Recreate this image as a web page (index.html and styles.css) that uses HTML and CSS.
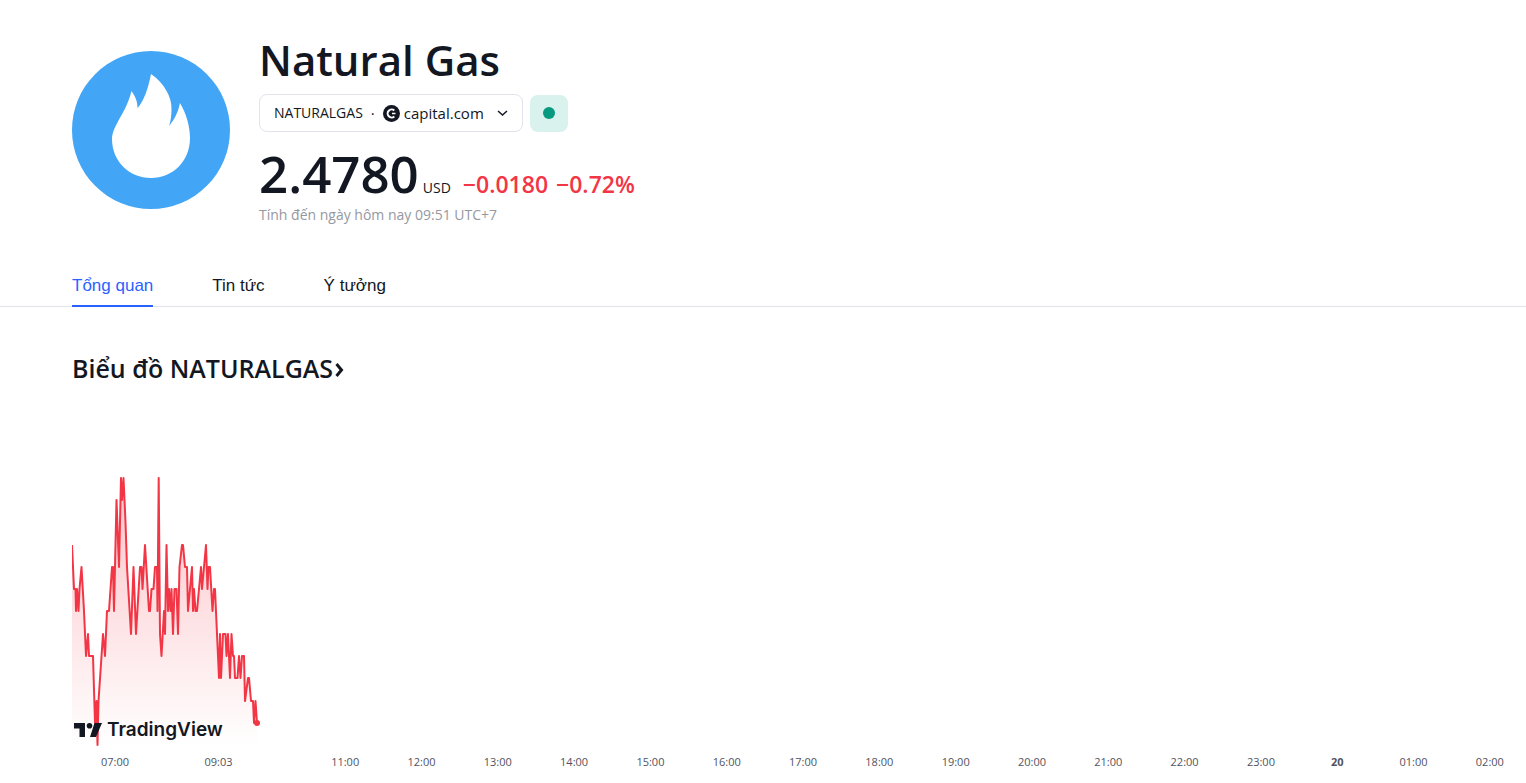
FILE: index.html
```html
<!DOCTYPE html>
<html lang="vi">
<head>
  <meta charset="UTF-8" />
  <meta name="viewport" content="width=device-width, initial-scale=1.0"/>
  <title>Natural Gas</title>
  <link rel="stylesheet" href="styles.css">
</head>
<body>
  <header class="symbol-header">
    <svg class="symbol-logo" viewBox="0 0 158 158" aria-hidden="true">
      <circle cx="79" cy="79" r="79" fill="#42a5f5"/>
      <path fill="#fff" d="M79 23C92 32 100 46 99.500 58C99.500 65 98.500 71 97 75C102 69 106 62 108 52C114 62 118 75 118 87C118 110 101 127 79 127C57 127 40 110 40 88C40 81 44 74 49 65C55 55 58 46 59.500 40C63 45 65.500 50 65.500 57C72 50 76 38 79 23Z"/>
    </svg>
    <div class="symbol-info">
      <h1>Natural Gas</h1>
      <div class="symbol-row">
        <button class="exchange" type="button">
          <span class="ticker">NATURALGAS</span>
          <span class="dot">·</span>
          <svg class="exchange-logo" width="17" height="17" viewBox="0 0 17 17" aria-hidden="true">
            <circle cx="8.500" cy="8.500" r="8.500" fill="#131722"/>
            <path d="M11.300 5.500A4 4 0 1 0 11.300 11.500" fill="none" stroke="#fff" stroke-width="2"/>
            <path d="M9 8.500h3.500" stroke="#fff" stroke-width="1.500"/>
          </svg>
          <span>capital.com</span>
          <svg class="arrow" width="11" height="7" viewBox="0 0 11 7" aria-hidden="true">
            <path d="M1 1l4.500 4L10 1" fill="none" stroke="#131722" stroke-width="1.500"/>
          </svg>
        </button>
        <button class="market-status" type="button" aria-label="Thị trường mở cửa"></button>
      </div>
      <div class="price-row">
        <span class="price">2.4780</span>
        <span class="currency">USD</span>
        <span class="change">−0.0180</span>
        <span class="change">−0.72%</span>
      </div>
      <div class="updated">Tính đến ngày hôm nay 09:51 UTC+7</div>
    </div>
  </header>

  <nav class="tabs">
    <a class="active" href="#tong-quan">Tổng quan</a>
    <a href="#tin-tuc">Tin tức</a>
    <a href="#y-tuong">Ý tưởng</a>
  </nav>

  <main id="tong-quan">
    <h2>
      <a href="#bieu-do">Biểu đồ NATURALGAS<svg width="9" height="20" viewBox="0 0 9 20" aria-hidden="true"><path d="M1.500 6l5 6-5 6" fill="none" stroke="#131722" stroke-width="3"/></svg></a>
    </h2>
    <div class="chart" id="bieu-do">
      <svg class="chart-plot" width="192" height="276" viewBox="72 470 192 276" role="img" aria-label="NATURALGAS">
        <defs>
          <linearGradient id="fill" x1="0" y1="0" x2="0" y2="1">
            <stop offset="0" stop-color="#f23645" stop-opacity=".3"/>
            <stop offset="1" stop-color="#f23645" stop-opacity="0"/>
          </linearGradient>
        </defs>
        <path id="area" fill="url(#fill)"/>
        <path id="line" fill="none" stroke="#f23645" stroke-width="2" stroke-linejoin="round"/>
        <circle cx="257" cy="722" r="3" fill="#f23645"/>
      </svg>
      <a class="watermark" href="#tradingview">
        <svg width="28" height="14" viewBox="0 0 28 14" aria-hidden="true">
          <path fill="#131722" d="M0 0h11v14H5.500V5.500H0zM20.500 0H28l-6 14h-6z"/>
          <circle cx="15.500" cy="2.800" r="2.800" fill="#131722"/>
        </svg>
        <span>TradingView</span>
      </a>
    </div>
    <ul class="time-axis">
      <li>07:00</li>
      <li>09:03</li>
      <li>11:00</li>
      <li>12:00</li>
      <li>13:00</li>
      <li>14:00</li>
      <li>15:00</li>
      <li>16:00</li>
      <li>17:00</li>
      <li>18:00</li>
      <li>19:00</li>
      <li>20:00</li>
      <li>21:00</li>
      <li>22:00</li>
      <li>23:00</li>
      <li class="day">20</li>
      <li>01:00</li>
      <li>02:00</li>
    </ul>
  </main>
<script>
  // [x, y] của từng mức giá
  const points = [
    [72,544],[74,588],[75.5,588],[76,610],[77,588],[78.5,610],[79.5,588],[81.5,566],[84,610],[86,655],
    [88,633],[89,655],[93,655],[95,722],[96.5,700],[97.5,744],[98.5,700],[103,633],[105,655],[107,610],
    [109,610],[112,566],[113,566],[114,610],[116.5,499],[119,566],[121,477],[122,499],[123.5,477],[125.5,521],
    [127,566],[131,633],[133.5,566],[136,633],[140,566],[141.5,566],[142.5,588],[145,544],[149,610],[150,610],
    [151.5,588],[153.5,588],[155,566],[157,566],[157.5,610],[158.7,477],[160,633],[161.5,655],[164,610],[165,633],
    [166.5,544],[168,610],[169,588],[170.5,610],[171.5,588],[173,633],[174.5,588],[176.5,588],[178,633],[179.5,566],
    [182,544],[183,544],[185,566],[187,566],[188,610],[190,588],[192,566],[193,610],[194,588],[195.5,610],
    [197,610],[199,588],[201,566],[202,588],[206,544],[207.5,588],[208.5,566],[210,566],[212.5,610],[214,588],
    [215,588],[217,633],[219,677],[220,633],[221,677],[223,633],[225.5,633],[226.5,655],[228,633],[230,677],
    [231.5,633],[233,655],[234,655],[235,677],[237.5,677],[239,655],[240.5,677],[242,655],[244,655],[245,700],
    [248,677],[249,677],[251,700],[253,700],[254,722],[255.5,700],[257,722]
  ];
  const line = "M" + points.map(p => p.join(" ")).join("L");
  document.getElementById("line").setAttribute("d", line);
  document.getElementById("area").setAttribute("d", line + "V746H72Z");
</script>
</body>
</html>
```
FILE: styles.css
```css
* {
  box-sizing: border-box;
}

body {
  margin: 0;
  background: #fff;
  color: #131722;
  font-family: "Trebuchet MS", "Open Sans", sans-serif;
  overflow-x: hidden;
}

a {
  color: inherit;
  text-decoration: none;
}

.symbol-header {
  display: flex;
  gap: 29px;
  padding: 34px 72px 0;
}

.symbol-logo {
  width: 158px;
  height: 158px;
  margin-top: 17px;
  flex-shrink: 0;
}

h1 {
  margin: 0;
  font-size: 42px;
  line-height: 52px;
  font-weight: 600;
}

.symbol-row {
  display: flex;
  align-items: center;
  gap: 7px;
  margin: 8px 0 16px;
}

.exchange {
  display: flex;
  align-items: center;
  width: 264px;
  height: 38px;
  padding: 0 14px;
  border: 1px solid #e0e3eb;
  border-radius: 8px;
  background: #fff;
  color: #131722;
  font: 15px/24px "Trebuchet MS", "Open Sans", sans-serif;
}

.ticker {
  font-size: 14px;
}

.dot {
  margin: 0 8px;
}

.exchange-logo {
  margin-right: 4px;
}

.arrow {
  margin-left: auto;
}

.market-status {
  display: grid;
  place-items: center;
  width: 38px;
  height: 37px;
  padding: 0;
  border: 0;
  border-radius: 8px;
  background: #d9f2ed;
}

.market-status::before {
  content: "";
  width: 12px;
  height: 12px;
  border-radius: 50%;
  background: #089981;
}

.price-row {
  display: flex;
  align-items: baseline;
  line-height: 24px;
}

.price {
  font-size: 51px;
  line-height: 50px;
  font-weight: 600;
}

.currency {
  margin: 0 12px 0 4px;
  font-size: 14px;
}

.change {
  margin-right: 8px;
  color: #f23645;
  font-size: 23px;
  font-weight: 600;
}

.updated {
  margin-top: 3px;
  color: #9598a1;
  font-size: 14px;
  line-height: 24px;
}

.tabs {
  display: flex;
  gap: 59px;
  margin-top: 36px;
  padding: 0 72px;
  border-bottom: 1px solid #e0e3eb;
  font: 17px/24px "Liberation Sans", Arial, sans-serif;
}

.tabs a {
  padding: 11px 0 7px;
  margin-bottom: -1px;
  border-bottom: 2px solid transparent;
}

.tabs .active {
  border-color: #2962ff;
  color: #2962ff;
}

main {
  padding-left: 72px;
}

h2 {
  margin: 45px 0 0;
  font-size: 25px;
  line-height: 32px;
  font-weight: 600;
}

h2 a {
  display: inline-flex;
  align-items: center;
  gap: 2px;
}

.chart {
  position: relative;
  margin-top: 87px;
}

.chart-plot {
  display: block;
}

.watermark {
  position: absolute;
  left: 2px;
  bottom: 5px;
  display: flex;
  align-items: center;
  gap: 5px;
  font: 600 19px/24px Inter, sans-serif;
}

.time-axis {
  display: grid;
  grid-template-columns: 86px 149px repeat(16, 1fr);
  margin: 7px -2px 0 0;
  padding: 0;
  list-style: none;
  color: #50535e;
  font-size: 11px;
  line-height: 16px;
  text-align: center;
}

.time-axis li:nth-child(2) {
  padding-right: 28px;
}

.time-axis .day {
  font-weight: 700;
}
```
